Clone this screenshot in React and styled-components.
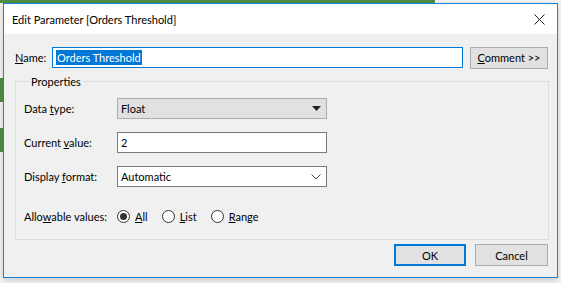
import styled, { createGlobalStyle } from "styled-components";

const GlobalStyle = createGlobalStyle`
  html, body {
    margin: 0;
    padding: 0;
    background: #f4f4f4;
  }
  * {
    box-sizing: border-box;
  }
`;

const Backdrop = styled.div`
  width: 561px;
  height: 283px;
  padding: 3px 3px 0 3px;
  background:
    linear-gradient(#4f8f44, #4f8f44) 0 0 / 435px 3px no-repeat,
    linear-gradient(#4f8f44, #4f8f44) 0 78px / 3px 24px no-repeat,
    linear-gradient(#4f8f44, #4f8f44) 0 128px / 3px 24px no-repeat,
    #f4f4f4;
  font-family: Lato, "Liberation Sans", sans-serif;
  font-size: 11px;
  color: #000;
`;

const Window = styled.div`
  width: 555px;
  height: 275px;
  border: 1px solid #1883d7;
  background: #f0f0f0;
  display: flex;
  flex-direction: column;
  box-shadow: 0 2px 6px rgba(0, 0, 0, 0.18);
`;

const TitleBar = styled.div`
  height: 30px;
  background: #fff;
  display: flex;
  align-items: center;
  justify-content: space-between;
  padding: 0 0 0 8px;
  font-size: 11px;
`;

const CloseButton = styled.div`
  width: 36px;
  height: 30px;
  display: flex;
  align-items: center;
  justify-content: center;
`;

const Body = styled.div`
  flex: 1;
  display: flex;
  flex-direction: column;
  padding: 13px 9px 11px 11px;
`;

const NameRow = styled.div`
  display: flex;
  align-items: center;
  height: 21px;
`;

const NameLabel = styled.span`
  width: 37px;
`;

const TextBox = styled.div`
  height: 21px;
  width: ${(p) => p.$w}px;
  background: #fff;
  border: 1px solid ${(p) => (p.$focused ? "#0078d7" : "#7a7a7a")};
  display: flex;
  align-items: center;
  padding-left: 3px;
`;

const Selected = styled.span`
  background: #0078d7;
  color: #fff;
  padding: 0 1px;
  line-height: 15px;
`;

const Button = styled.div`
  width: ${(p) => p.$w}px;
  height: 22px;
  background: #e1e1e1;
  border: ${(p) => (p.$default ? "2px solid #0078d7" : "1px solid #adadad")};
  display: flex;
  align-items: center;
  justify-content: center;
  margin-left: ${(p) => p.$ml || 0}px;
`;

const Group = styled.fieldset`
  margin: 7px 0 0 0;
  width: 534px;
  height: 165px;
  border: 1px solid #dcdcdc;
  padding: 10px 0 0 8px;
  display: flex;
  flex-direction: column;
  gap: 13px;
`;

const Legend = styled.legend`
  padding: 0 2px;
  margin-left: 5px;
`;

const Row = styled.div`
  display: flex;
  align-items: center;
  height: 21px;
  margin-top: ${(p) => p.$mt || 0}px;
`;

const Label = styled.span`
  width: 93px;
`;

const Combo = styled.div`
  width: 210px;
  height: 21px;
  background: ${(p) => (p.$button ? "#e1e1e1" : "#fff")};
  border: 1px solid ${(p) => (p.$button ? "#adadad" : "#7a7a7a")};
  display: flex;
  align-items: center;
  justify-content: space-between;
  padding: 0 5px 0 3px;
`;

const Radios = styled.div`
  display: flex;
  align-items: center;
`;

const RadioItem = styled.div`
  display: flex;
  align-items: center;
  gap: 5px;
  margin-right: 14px;
`;

const Circle = styled.span`
  width: 13px;
  height: 13px;
  border-radius: 50%;
  border: 1px solid #333;
  background: #fff;
  display: flex;
  align-items: center;
  justify-content: center;
  &::after {
    content: "";
    width: 7px;
    height: 7px;
    border-radius: 50%;
    background: ${(p) => (p.$checked ? "#333" : "transparent")};
  }
`;

const Footer = styled.div`
  margin-top: auto;
  display: flex;
  justify-content: flex-end;
`;

const Radio = ({ checked, children }) => (
  <RadioItem>
    <Circle $checked={checked} />
    <span>{children}</span>
  </RadioItem>
);

const App = () => {
  return (
    <Backdrop>
      <GlobalStyle />
      <Window>
        <TitleBar>
          <span>Edit Parameter [Orders Threshold]</span>
          <CloseButton>
            <svg width="11" height="11" viewBox="0 0 11 11">
              <path d="M0.5 0.5 L10.5 10.5 M10.5 0.5 L0.5 10.5" stroke="#222" strokeWidth="1" />
            </svg>
          </CloseButton>
        </TitleBar>
        <Body>
          <NameRow>
            <NameLabel>
              <u>N</u>ame:
            </NameLabel>
            <TextBox $w={411} $focused>
              <Selected>Orders Threshold</Selected>
            </TextBox>
            <Button $w={78} $ml={7}>
              <span>
                <u>C</u>omment &gt;&gt;
              </span>
            </Button>
          </NameRow>
          <Group>
            <Legend>Properties</Legend>
            <Row>
              <Label>
                Data <u>t</u>ype:
              </Label>
              <Combo $button>
                <span>Float</span>
                <svg width="9" height="5" viewBox="0 0 9 5">
                  <path d="M0 0 H9 L4.5 5 Z" fill="#222" />
                </svg>
              </Combo>
            </Row>
            <Row>
              <Label>
                Current <u>v</u>alue:
              </Label>
              <TextBox $w={210}>2</TextBox>
            </Row>
            <Row>
              <Label>
                Display <u>f</u>ormat:
              </Label>
              <Combo>
                <span>Automatic</span>
                <svg width="10" height="6" viewBox="0 0 10 6">
                  <path d="M0.5 0.5 L5 5 L9.5 0.5" stroke="#444" fill="none" strokeWidth="1" />
                </svg>
              </Combo>
            </Row>
            <Row $mt={6}>
              <Label>
                Allo<u>w</u>able values:
              </Label>
              <Radios>
                <Radio checked>
                  <u>A</u>ll
                </Radio>
                <Radio>
                  <u>L</u>ist
                </Radio>
                <Radio>
                  <u>R</u>ange
                </Radio>
              </Radios>
            </Row>
          </Group>
          <Footer>
            <Button $w={72} $default>
              OK
            </Button>
            <Button $w={73} $ml={9}>
              Cancel
            </Button>
          </Footer>
        </Body>
      </Window>
    </Backdrop>
  );
};

export default App;
